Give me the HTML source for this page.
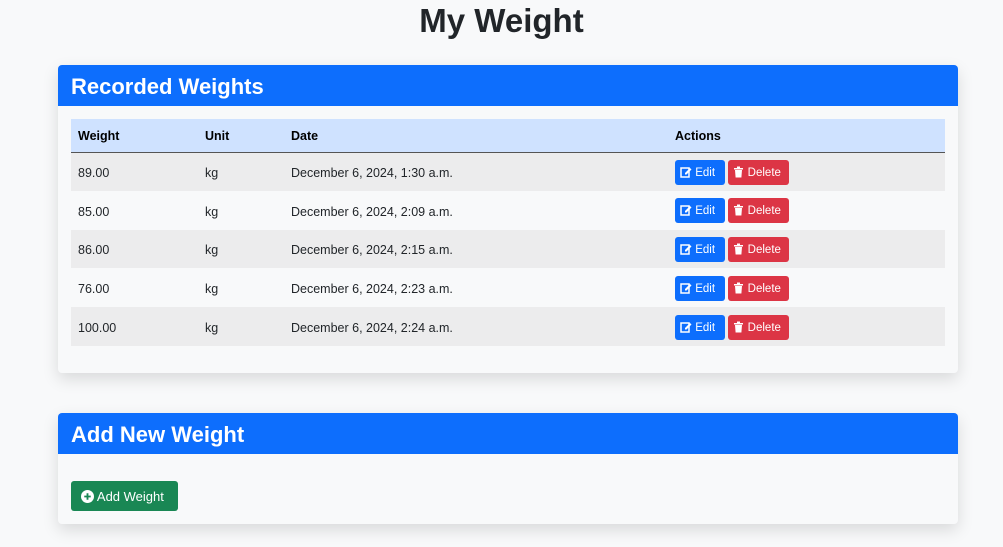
<!DOCTYPE html>
<html><head><style>
*{box-sizing:border-box;margin:0;padding:0}
body{width:1003px;height:547px;background:#f8f9fa;font-family:"Liberation Sans",sans-serif;color:#212529;position:relative;overflow:hidden}
h1{position:absolute;top:1px;left:0;width:1003px;text-align:center;font-size:33px;font-weight:bold;line-height:40px}
.card{position:absolute;left:58px;width:900px;background:#f8f9fa;border-radius:4px;box-shadow:0 6px 16px rgba(0,0,0,.13)}
.hd{background:#0d6efd;color:#fff;font-size:22px;font-weight:bold;height:41px;line-height:44px;padding-left:13px;border-radius:4px 4px 0 0}
table{position:absolute;left:13px;top:54px;width:874px;border-collapse:collapse;font-size:12.5px}
th{background:#cfe2ff;height:33px;text-align:left;padding-left:7px;padding-top:2px;font-weight:bold;color:#000;border-bottom:1px solid #555}
td{height:38.8px;padding-left:7px;padding-top:3px;white-space:nowrap}
tr:nth-child(even) td{background:#ececed}
.b{display:inline-block;color:#fff;font-size:11.5px;height:25px;line-height:27px;border-radius:3px;padding:0 5px;vertical-align:middle;margin-top:-2px;white-space:nowrap;overflow:hidden}
.e{background:#0d6efd;width:50px}.d{background:#dc3545;margin-left:0;width:61px}
svg{vertical-align:-2px}
.add{position:absolute;left:13px;top:68px;background:#198754;color:#fff;font-size:13px;height:30px;line-height:31px;width:107px;border-radius:3px;padding-left:10px}
</style></head><body>
<h1>My Weight</h1>
<div class="card" style="top:65px;height:308px">
<div class="hd">Recorded Weights</div>
<table>
<tr><th style="width:127px">Weight</th><th style="width:86px">Unit</th><th style="width:384px">Date</th><th>Actions</th></tr>
<tr><td>89.00</td><td>kg</td><td>December 6, 2024, 1:30 a.m.</td><td><span class="b e"><svg width="12" height="12" viewBox="0 0 12 12"><rect x="1" y="2" width="8" height="9" fill="none" stroke="#fff" stroke-width="1.5"/><path d="M5 7l5-5 1.5 1.5-5 5H5z" fill="#fff"/></svg> Edit</span> <span class="b d"><svg width="11" height="12" viewBox="0 0 11 12"><path d="M1 2h9v1.5H1zM4 .5h3v1.5H4zM2 4h7l-.6 7.5H2.6z" fill="#fff"/></svg> Delete</span></td></tr>
<tr><td>85.00</td><td>kg</td><td>December 6, 2024, 2:09 a.m.</td><td><span class="b e"><svg width="12" height="12" viewBox="0 0 12 12"><rect x="1" y="2" width="8" height="9" fill="none" stroke="#fff" stroke-width="1.5"/><path d="M5 7l5-5 1.5 1.5-5 5H5z" fill="#fff"/></svg> Edit</span> <span class="b d"><svg width="11" height="12" viewBox="0 0 11 12"><path d="M1 2h9v1.5H1zM4 .5h3v1.5H4zM2 4h7l-.6 7.5H2.6z" fill="#fff"/></svg> Delete</span></td></tr>
<tr><td>86.00</td><td>kg</td><td>December 6, 2024, 2:15 a.m.</td><td><span class="b e"><svg width="12" height="12" viewBox="0 0 12 12"><rect x="1" y="2" width="8" height="9" fill="none" stroke="#fff" stroke-width="1.5"/><path d="M5 7l5-5 1.5 1.5-5 5H5z" fill="#fff"/></svg> Edit</span> <span class="b d"><svg width="11" height="12" viewBox="0 0 11 12"><path d="M1 2h9v1.5H1zM4 .5h3v1.5H4zM2 4h7l-.6 7.5H2.6z" fill="#fff"/></svg> Delete</span></td></tr>
<tr><td>76.00</td><td>kg</td><td>December 6, 2024, 2:23 a.m.</td><td><span class="b e"><svg width="12" height="12" viewBox="0 0 12 12"><rect x="1" y="2" width="8" height="9" fill="none" stroke="#fff" stroke-width="1.5"/><path d="M5 7l5-5 1.5 1.5-5 5H5z" fill="#fff"/></svg> Edit</span> <span class="b d"><svg width="11" height="12" viewBox="0 0 11 12"><path d="M1 2h9v1.5H1zM4 .5h3v1.5H4zM2 4h7l-.6 7.5H2.6z" fill="#fff"/></svg> Delete</span></td></tr>
<tr><td>100.00</td><td>kg</td><td>December 6, 2024, 2:24 a.m.</td><td><span class="b e"><svg width="12" height="12" viewBox="0 0 12 12"><rect x="1" y="2" width="8" height="9" fill="none" stroke="#fff" stroke-width="1.5"/><path d="M5 7l5-5 1.5 1.5-5 5H5z" fill="#fff"/></svg> Edit</span> <span class="b d"><svg width="11" height="12" viewBox="0 0 11 12"><path d="M1 2h9v1.5H1zM4 .5h3v1.5H4zM2 4h7l-.6 7.5H2.6z" fill="#fff"/></svg> Delete</span></td></tr>
</table>
</div>
<div class="card" style="top:413px;height:111px">
<div class="hd">Add New Weight</div>
<div class="add"><svg width="13" height="13" viewBox="0 0 14 14"><circle cx="7" cy="7" r="7" fill="#fff"/><path d="M7 3.5v7M3.5 7h7" stroke="#198754" stroke-width="2"/></svg> Add Weight</div>
</div>
</body></html>
